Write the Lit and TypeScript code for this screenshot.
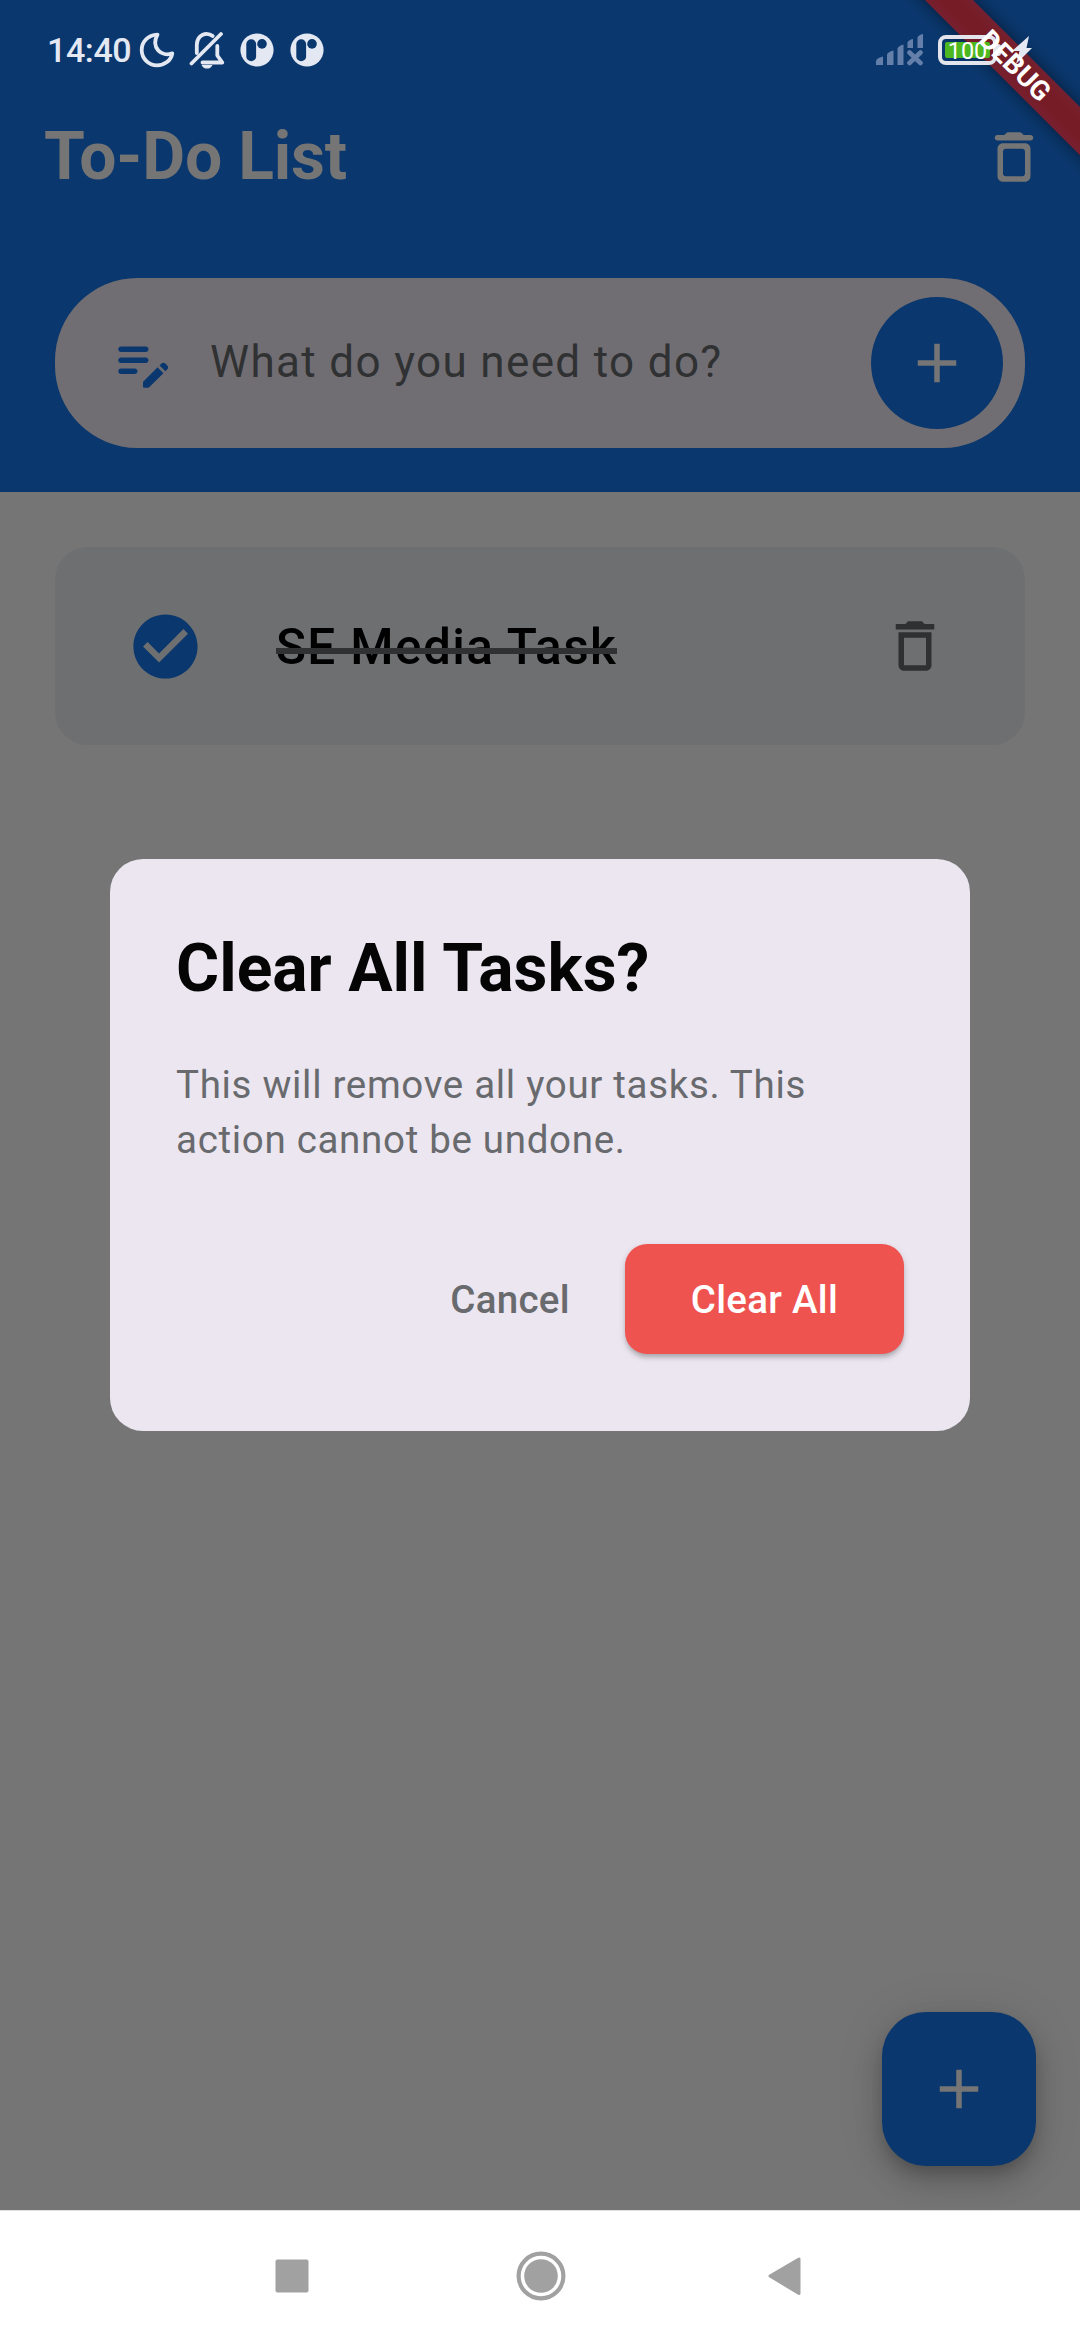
import { LitElement, html, css, svg } from "lit";
import { customElement } from "lit/decorators.js";

const plus = svg`<path d="M19 13h-6v6h-2v-6H5v-2h6V5h2v6h6v2z" />`;

@customElement("status-bar")
class StatusBar extends LitElement {
  static styles = css`
    :host {
      display: flex;
      box-sizing: border-box;
      height: 99px;
      padding: 0 48px 0 47px;
      align-items: center;
      justify-content: space-between;
      color: #e3e8f2;
    }
    .group {
      display: flex;
      align-items: center;
    }
    .time {
      width: 92px;
      font-size: 34px;
      font-weight: 500;
      line-height: 40px;
      letter-spacing: -0.4px;
    }
    svg {
      display: block;
    }
    .moon {
      margin-right: 14px;
    }
    .bell {
      margin-right: 15px;
    }
    .app {
      margin-right: 16px;
    }
    .signal {
      margin-right: 15px;
    }
    .battery {
      display: flex;
      box-sizing: border-box;
      width: 59px;
      height: 30px;
      padding: 3px;
      border: 4px solid #e3e4ec;
      border-radius: 8px;
    }
    .charge {
      flex: 1;
      border-radius: 2px;
      background: #4cb71f;
      color: #fff;
      font-size: 23.5px;
      font-weight: 400;
      line-height: 18px;
      text-align: center;
    }
    .tip {
      width: 4px;
      height: 12px;
      margin-right: 11px;
      border-radius: 0 3px 3px 0;
      background: #e3e4ec;
    }
  `;

  private appBadge() {
    return html`<svg class="app" width="34" height="34" viewBox="0 0 34 34">
      <circle cx="17" cy="17" r="16.6" fill="#e3e8f2" />
      <rect x="6.3" y="6.3" width="9.8" height="22" rx="4.9" fill="#0a376d" />
      <circle cx="22" cy="10.9" r="4.8" fill="#0a376d" />
    </svg>`;
  }

  render() {
    return html`
      <div class="group">
        <span class="time">14:40</span>
        <svg class="moon" width="36" height="36" viewBox="0 0 36 36" fill="none" stroke="#e3e8f2" stroke-width="3.8" stroke-linejoin="round">
          <path d="M18.5 2.7C8.5 3 2.7 10.2 2.7 18C2.7 26.5 9.5 33.3 18 33.3C25.5 33.3 32 28.7 33.3 21.3C22.5 25.5 11.5 15.5 18.5 2.7Z" />
        </svg>
        <svg class="bell" width="36" height="38" viewBox="0 0 36 38">
          <g fill="none" stroke="#e3e8f2" stroke-width="3.8" stroke-linecap="round" stroke-linejoin="round">
            <path d="M2.5 32.5L32 3" />
            <path d="M7.8 22V14C7.8 7.5 12 2.8 17.5 2.8C20.2 2.8 22 3.6 23.7 5" />
            <path d="M13.5 31.5H33.3L28.3 24.5V15" />
          </g>
          <path d="M12.5 34H23.5C22.5 36.5 20.5 37.6 18 37.6C15.5 37.6 13.5 36.5 12.5 34Z" fill="#e3e8f2" />
        </svg>
        ${this.appBadge()}${this.appBadge()}
      </div>
      <div class="group">
        <svg class="signal" width="47" height="32" viewBox="0 0 47 32" fill="#6480aa">
          <path d="M0 31V27.5Q0 24 7 22.5V31ZM11 31V20.5Q12 18 17.5 16.5V31ZM21.500 31V14.500Q22.500 12 27.500 10.500V31ZM31.500 14V8.500Q32.500 6 37 5V14ZM41.500 14V3.500Q42.500 1 47 0V14Z" />
          <path d="M33.500 18.500L44.500 29M44.500 18.500L33.500 29" stroke="#6480aa" stroke-width="4.6" stroke-linecap="round" />
        </svg>
        <div class="battery"><div class="charge">100</div></div>
        <span class="tip"></span>
        <svg width="20" height="28" viewBox="0 0 20 28" fill="#e3e8f2">
          <path d="M17 0L14.5 12H20L4 28L7.5 15H0Z" />
        </svg>
      </div>
    `;
  }
}

@customElement("app-root")
class AppRoot extends LitElement {
  static styles = css`
    :host {
      display: block;
      font-family: Roboto, "Liberation Sans", sans-serif;
    }
    .screen {
      position: relative;
      display: flex;
      flex-direction: column;
      width: 1080px;
      height: 2340px;
      overflow: hidden;
      background: #757575;
    }
    svg {
      display: block;
      flex: none;
    }
    .header {
      box-sizing: border-box;
      height: 492px;
      background: #0a376d;
    }
    .status-space {
      height: 99px;
    }
    .app-bar {
      display: flex;
      height: 116px;
      padding: 0 33px 0 44px;
      align-items: center;
      justify-content: space-between;
      color: #757575;
    }
    .title {
      margin: 0;
      font-size: 66px;
      font-weight: 700;
      line-height: 78px;
      letter-spacing: -0.15px;
    }
    .entry {
      display: flex;
      box-sizing: border-box;
      height: 170px;
      margin: 63px 55px 0;
      padding: 0 22px 0 55px;
      align-items: center;
      border-radius: 82.5px;
      background: #716e73;
    }
    .hint {
      flex: 1;
      margin-left: 34px;
      padding-bottom: 3px;
      color: #2f3132;
      font-size: 44px;
      line-height: 66px;
      letter-spacing: 1.35px;
    }
    .add {
      display: flex;
      width: 132px;
      height: 132px;
      align-items: center;
      justify-content: center;
      border-radius: 50%;
      background: #0a376d;
    }
    .content {
      display: flex;
      flex: 1;
      flex-direction: column;
      justify-content: space-between;
      padding: 55px 44px 44px 55px;
    }
    .task {
      display: flex;
      box-sizing: border-box;
      width: 970px;
      height: 198px;
      padding: 0 77px 0 72px;
      align-items: center;
      border-radius: 33px;
      background: #6d6f71;
    }
    .label {
      flex: 1;
      margin-left: 72px;
      padding-top: 1px;
      color: #000;
      font-size: 49.5px;
      font-weight: 500;
      line-height: 74px;
      letter-spacing: 1.375px;
    }
    .struck {
      position: relative;
      display: inline-block;
    }
    .struck::after {
      content: "";
      position: absolute;
      top: 38px;
      left: 0;
      right: 0;
      height: 6px;
      background: #2f3132;
    }
    .fab {
      display: flex;
      width: 154px;
      height: 154px;
      align-self: flex-end;
      align-items: center;
      justify-content: center;
      border-radius: 44px;
      background: #0a376d;
      box-shadow:
        0 8px 14px -3px rgba(0, 0, 0, 0.16),
        0 16px 28px rgba(0, 0, 0, 0.16),
        0 3px 50px rgba(0, 0, 0, 0.1);
    }
    .nav {
      display: flex;
      box-sizing: border-box;
      height: 130px;
      border-top: 1px solid #e0e0e0;
      padding: 0 276px 0 275px;
      align-items: center;
      justify-content: space-between;
      background: #fff;
    }
    .home {
      margin-left: 4px;
    }
    .overlay {
      position: absolute;
      inset: 0 0 130px 0;
      display: flex;
      align-items: center;
      justify-content: center;
      padding-top: 80px;
    }
    .dialog {
      box-sizing: border-box;
      width: 860px;
      height: 572px;
      padding: 66px;
      border-radius: 33px;
      background: #ece6f0;
    }
    .dialog-title {
      margin: 0;
      color: #050505;
      font-size: 66px;
      font-weight: 700;
      line-height: 88px;
    }
    .message {
      margin: 44px 0 0;
      color: #686a6e;
      font-size: 38.5px;
      line-height: 55px;
      letter-spacing: 0.69px;
    }
    .actions {
      display: flex;
      margin-top: 77px;
      align-items: center;
      justify-content: flex-end;
      gap: 55px;
      font-size: 38.5px;
      font-weight: 500;
      line-height: 55px;
      letter-spacing: 0.275px;
    }
    .cancel {
      color: #686a6e;
    }
    .confirm {
      display: flex;
      height: 110px;
      padding: 0 66px;
      align-items: center;
      border-radius: 22px;
      background: #ef5350;
      color: #fff;
      box-shadow:
        0 4px 4px -1px rgba(0, 0, 0, 0.16),
        0 3px 7px rgba(0, 0, 0, 0.16);
    }
    .corner {
      position: absolute;
      top: 0;
      right: 0;
      width: 260px;
      height: 260px;
      overflow: hidden;
    }
    .ribbon {
      position: absolute;
      top: 48.5px;
      left: 44.5px;
      width: 300px;
      height: 33.5px;
      background: rgba(183, 28, 28, 0.63);
      color: #fff;
      font-size: 27.5px;
      font-weight: 700;
      line-height: 33.5px;
      text-align: center;
      transform: rotate(45deg);
    }
    .shade {
      background: rgba(0, 0, 0, 0.5);
      filter: blur(8px);
    }
    .ribbon-text {
      background: none;
    }
    .status {
      position: absolute;
      inset: 0 0 auto 0;
    }
  `;

  render() {
    return html`
      <div class="screen">
        <div class="header">
          <div class="status-space"></div>
          <div class="app-bar">
            <h1 class="title">To-Do List</h1>
            <svg width="66" height="66" viewBox="0 0 24 24" fill="currentColor">
              <path d="M6 19c0 1.1.9 2 2 2h8c1.1 0 2-.9 2-2V9c0-1.1-.9-2-2-2H8c-1.1 0-2 .9-2 2v10zM9 9h6c.55 0 1 .45 1 1v8c0 .55-.45 1-1 1H9c-.55 0-1-.45-1-1v-8c0-.55.45-1 1-1zm6.5-5l-.71-.71c-.18-.18-.44-.29-.7-.29H9.910c-.26 0-.52.11-.7.29L8.5 4H6c-.55 0-1 .45-1 1s.45 1 1 1h12c.55 0 1-.45 1-1s-.45-1-1-1h-2.5z" />
            </svg>
          </div>
          <div class="entry">
            <svg width="66" height="66" viewBox="0 0 24 24" fill="#0a376d">
              <path d="M14 11c0 .55-.45 1-1 1H4c-.55 0-1-.45-1-1s.45-1 1-1h9c.55 0 1 .45 1 1zM3 7c0 .55.45 1 1 1h9c.55 0 1-.45 1-1s-.45-1-1-1H4c-.55 0-1 .45-1 1zm7 8c0-.55-.45-1-1-1H4c-.55 0-1 .45-1 1s.45 1 1 1h5c.55 0 1-.45 1-1zm8.010-2.130.710-.710c.39-.39 1.020-.39 1.410 0l.710.710c.39.39.39 1.020 0 1.410l-.710.710-2.120-2.120zm-.710.710-5.160 5.160c-.09.09-.14.21-.14.35v1.410c0 .28.22.5.5.5h1.410c.13 0 .26-.05.35-.15l5.160-5.160-2.120-2.110z" />
            </svg>
            <span class="hint">What do you need to do?</span>
            <div class="add">
              <svg width="66" height="66" viewBox="0 0 24 24" fill="#757575">${plus}</svg>
            </div>
          </div>
        </div>
        <div class="content">
          <div class="task">
            <svg width="77" height="77" viewBox="0 0 24 24" fill="#0a376d">
              <path d="M12 2C6.48 2 2 6.48 2 12s4.48 10 10 10 10-4.48 10-10S17.52 2 12 2zm-2 15l-5-5 1.410-1.410L10 14.170l7.590-7.590L19 8l-9 9z" />
            </svg>
            <span class="label"><span class="struck">SE Media Task</span></span>
            <svg width="66" height="66" viewBox="0 0 24 24" fill="#2e3032">
              <path d="M6 19c0 1.1.9 2 2 2h8c1.1 0 2-.9 2-2V7H6v12zM8 9h8v10H8V9zm7.5-5l-1-1h-5l-1 1H5v2h14V4z" />
            </svg>
          </div>
          <div class="fab">
            <svg width="66" height="66" viewBox="0 0 24 24" fill="#757575">${plus}</svg>
          </div>
        </div>
        <div class="nav">
          <svg width="34" height="34" viewBox="0 0 34 34"><rect x="0.5" y="0.5" width="33" height="33" rx="2" fill="#a1a1a1" /></svg>
          <svg class="home" width="50" height="50" viewBox="0 0 50 50" fill="#a1a1a1">
            <circle cx="25" cy="25" r="22.4" fill="none" stroke="#a1a1a1" stroke-width="4.2" />
            <circle cx="25" cy="25" r="16.8" />
          </svg>
          <svg width="36" height="40" viewBox="0 0 36 40">
            <path d="M2 20L31 3V37.5Z" fill="#a1a1a1" stroke="#a1a1a1" stroke-width="3" stroke-linejoin="round" />
          </svg>
        </div>
        <div class="overlay">
          <div class="dialog">
            <h2 class="dialog-title">Clear All Tasks?</h2>
            <p class="message">This will remove all your tasks. This action cannot be undone.</p>
            <div class="actions">
              <span class="cancel">Cancel</span>
              <span class="confirm">Clear All</span>
            </div>
          </div>
        </div>
        <div class="corner">
          <div class="ribbon shade"></div>
          <div class="ribbon"></div>
        </div>
        <status-bar class="status"></status-bar>
        <div class="corner"><div class="ribbon ribbon-text">DEBUG</div></div>
      </div>
    `;
  }
}
